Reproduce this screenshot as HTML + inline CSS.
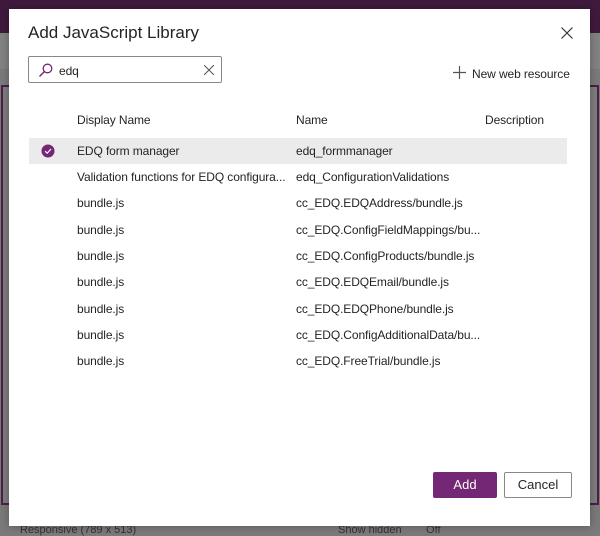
<!DOCTYPE html>
<html><head><style>
body{margin:0;width:600px;height:534px;overflow:hidden;background:#7a7a7a;font-family:"Liberation Sans",sans-serif;position:relative}
.top{position:absolute;left:0;top:0;width:600px;height:33px;background:#3f1a3d}
.bar2{position:absolute;left:0;top:33px;width:600px;height:36px;background:#828282}
.frame{position:absolute;left:1px;top:85px;width:598px;height:420px;border:2px solid #4a1f48;box-sizing:border-box;background:#7e7e7e}
.dlg{position:absolute;left:9px;top:9px;width:581px;height:517px;background:#fff;box-shadow:0 0 8px rgba(0,0,0,.3)}
.t{position:absolute;color:#252423;font-size:12px;white-space:nowrap;letter-spacing:-0.1px}
.btm{position:absolute;top:524px;font-size:11px;color:#333}
</style></head><body>
<div class="top"></div><div class="bar2"></div><div class="frame"></div>
<div class="btm" style="left:20px">Responsive (789 x 513)</div>
<div class="btm" style="left:338px">Show hidden &nbsp;&nbsp;&nbsp;&nbsp;&nbsp;&nbsp; Off</div>
<div class="dlg">
<div class="t" style="left:19px;top:14px;font-size:17px;letter-spacing:0">Add JavaScript Library</div>
<svg style="position:absolute;left:552px;top:18px" width="12" height="12"><path d="M0.5 0.5L11.5 11.5M11.5 0.5L0.5 11.5" stroke="#333" stroke-width="1.2"/></svg>
<div style="position:absolute;left:19px;top:47px;width:194px;height:27px;border:1px solid #8a8886;border-radius:2px;box-sizing:border-box"></div>
<svg style="position:absolute;left:29px;top:54px" width="15" height="15"><circle cx="9.5" cy="5.5" r="4.3" fill="none" stroke="#742774" stroke-width="1.3"/><path d="M6.5 8.5L1.5 13.5" stroke="#742774" stroke-width="1.4"/></svg>
<div class="t" style="left:50px;top:55px">edq</div>
<svg style="position:absolute;left:195px;top:56px" width="10" height="10"><path d="M0 0L10 10M10 0L0 10" stroke="#555" stroke-width="1"/></svg>
<svg style="position:absolute;left:444px;top:57px" width="13" height="13"><path d="M6.5 0V13M0 6.5H13" stroke="#555" stroke-width="1.2"/></svg>
<div class="t" style="left:463px;top:58px">New web resource</div>
<div class="t" style="left:68px;top:104px">Display Name</div>
<div class="t" style="left:287px;top:104px">Name</div>
<div class="t" style="left:476px;top:104px">Description</div>
<div style="position:absolute;left:20px;top:129px;width:538px;height:26px;background:#ebebeb"></div>
<svg style="position:absolute;left:32px;top:135px" width="14" height="14"><circle cx="7" cy="7" r="6.5" fill="#742774"/><path d="M4 7.2L6.2 9.2L10 5" stroke="#fff" stroke-width="1.2" fill="none"/></svg>
<div class="t" style="left:68px;top:135px">EDQ form manager</div><div class="t" style="left:287px;top:135px">edq_formmanager</div>
<div class="t" style="left:68px;top:161px">Validation functions for EDQ configura...</div><div class="t" style="left:287px;top:161px">edq_ConfigurationValidations</div>
<div class="t" style="left:68px;top:187px">bundle.js</div><div class="t" style="left:287px;top:187px">cc_EDQ.EDQAddress/bundle.js</div>
<div class="t" style="left:68px;top:214px">bundle.js</div><div class="t" style="left:287px;top:214px">cc_EDQ.ConfigFieldMappings/bu...</div>
<div class="t" style="left:68px;top:240px">bundle.js</div><div class="t" style="left:287px;top:240px">cc_EDQ.ConfigProducts/bundle.js</div>
<div class="t" style="left:68px;top:266px">bundle.js</div><div class="t" style="left:287px;top:266px">cc_EDQ.EDQEmail/bundle.js</div>
<div class="t" style="left:68px;top:293px">bundle.js</div><div class="t" style="left:287px;top:293px">cc_EDQ.EDQPhone/bundle.js</div>
<div class="t" style="left:68px;top:319px">bundle.js</div><div class="t" style="left:287px;top:319px">cc_EDQ.ConfigAdditionalData/bu...</div>
<div class="t" style="left:68px;top:345px">bundle.js</div><div class="t" style="left:287px;top:345px">cc_EDQ.FreeTrial/bundle.js</div>
<div style="position:absolute;left:424px;top:463px;width:64px;height:26px;background:#742774;border-radius:2px;color:#fff;font-size:13px;text-align:center;line-height:26px">Add</div>
<div style="position:absolute;left:495px;top:463px;width:68px;height:26px;border:1px solid #8a8886;box-sizing:border-box;border-radius:2px;color:#252423;font-size:13px;text-align:center;line-height:24px">Cancel</div>
</div>
</body></html>
